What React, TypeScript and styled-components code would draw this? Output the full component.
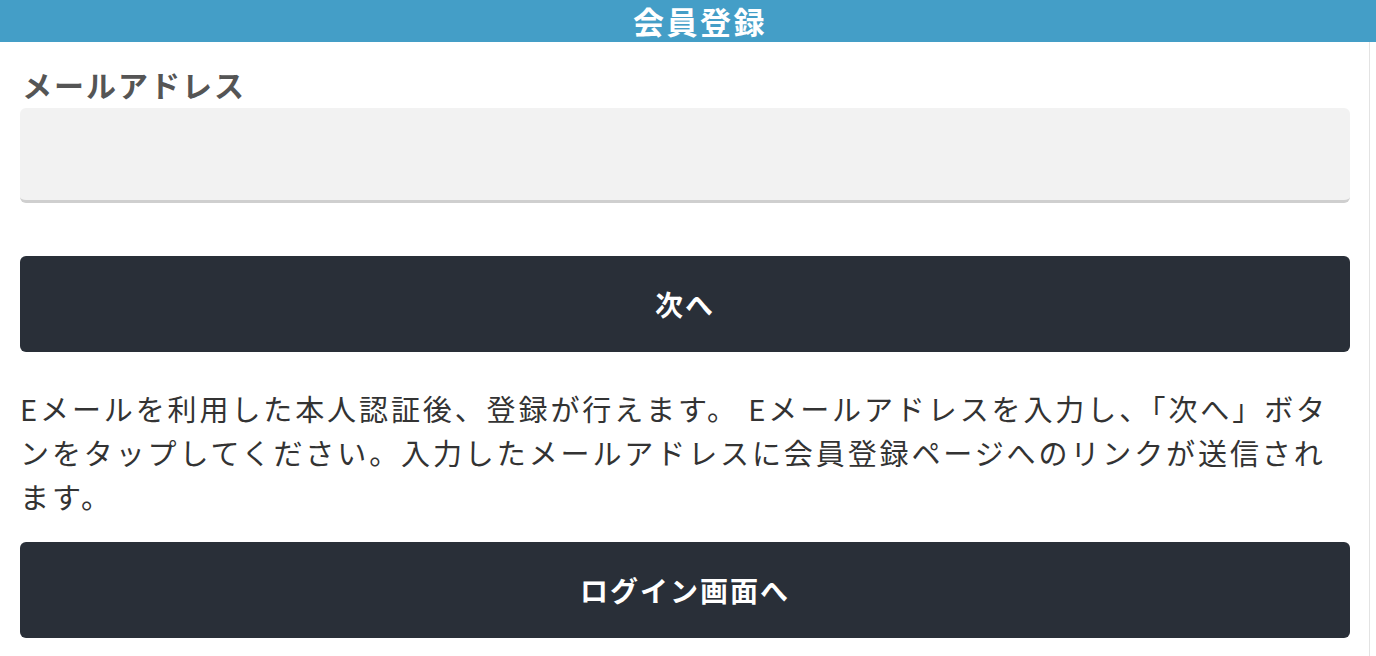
import styled, { createGlobalStyle } from "styled-components";

const GlobalStyle = createGlobalStyle`
  html, body {
    margin: 0;
    padding: 0;
    background: #fff;
  }
  body {
    font-family: "Noto Sans CJK JP", "Noto Sans", sans-serif;
  }
`;

const Page = styled.div`
  width: 1376px;
  height: 656px;
  overflow: hidden;
`;

const Header = styled.header`
  height: 42px;
  padding-left: 24px;
  background: #449ec7;
  color: #fff;
  display: flex;
  align-items: center;
  justify-content: center;
  font-size: 31px;
  font-weight: 700;
  letter-spacing: 2.5px;
  line-height: 42px;
`;

const Content = styled.main`
  width: 1370px;
  box-sizing: border-box;
  border-right: 1px solid #e3e3e3;
  height: 614px;
  padding: 22px 19px 0 20px;
  display: flex;
  flex-direction: column;
`;

const Label = styled.label`
  color: #555;
  font-size: 30px;
  font-weight: 700;
  letter-spacing: 2px;
  line-height: 40px;
  padding-left: 2px;
  margin-bottom: 4px;
`;

const Input = styled.input`
  display: block;
  height: 95px;
  box-sizing: border-box;
  border: none;
  border-bottom: 3px solid #cfcfcf;
  border-radius: 6px;
  background: #f2f2f2;
  outline: none;
  font-size: 26px;
  padding: 0 20px;
`;

const Button = styled.button<{ $gap: number }>`
  display: flex;
  align-items: center;
  justify-content: center;
  height: 96px;
  margin-top: ${({ $gap }) => $gap}px;
  border: none;
  border-radius: 6px;
  background: #292f38;
  color: #fff;
  font-family: inherit;
  font-size: 28px;
  font-weight: 700;
  letter-spacing: 2px;
  cursor: pointer;
`;

const Notice = styled.p`
  margin: 34px 0 0;
  color: #333;
  font-size: 29px;
  line-height: 44px;
  letter-spacing: 2.9px;
`;

export default function App() {
  return (
    <Page>
      <GlobalStyle />
      <Header>会員登録</Header>
      <Content>
        <Label>メールアドレス</Label>
        <Input type="email" />
        <Button $gap={53}>次へ</Button>
        <Notice>
          Eメールを利用した本人認証後、登録が行えます。
          Eメールアドレスを入力し、「次へ」ボタンをタップしてください。入力したメールアドレスに会員登録ページへのリンクが送信されます。
        </Notice>
        <Button $gap={24}>ログイン画面へ</Button>
      </Content>
    </Page>
  );
}
